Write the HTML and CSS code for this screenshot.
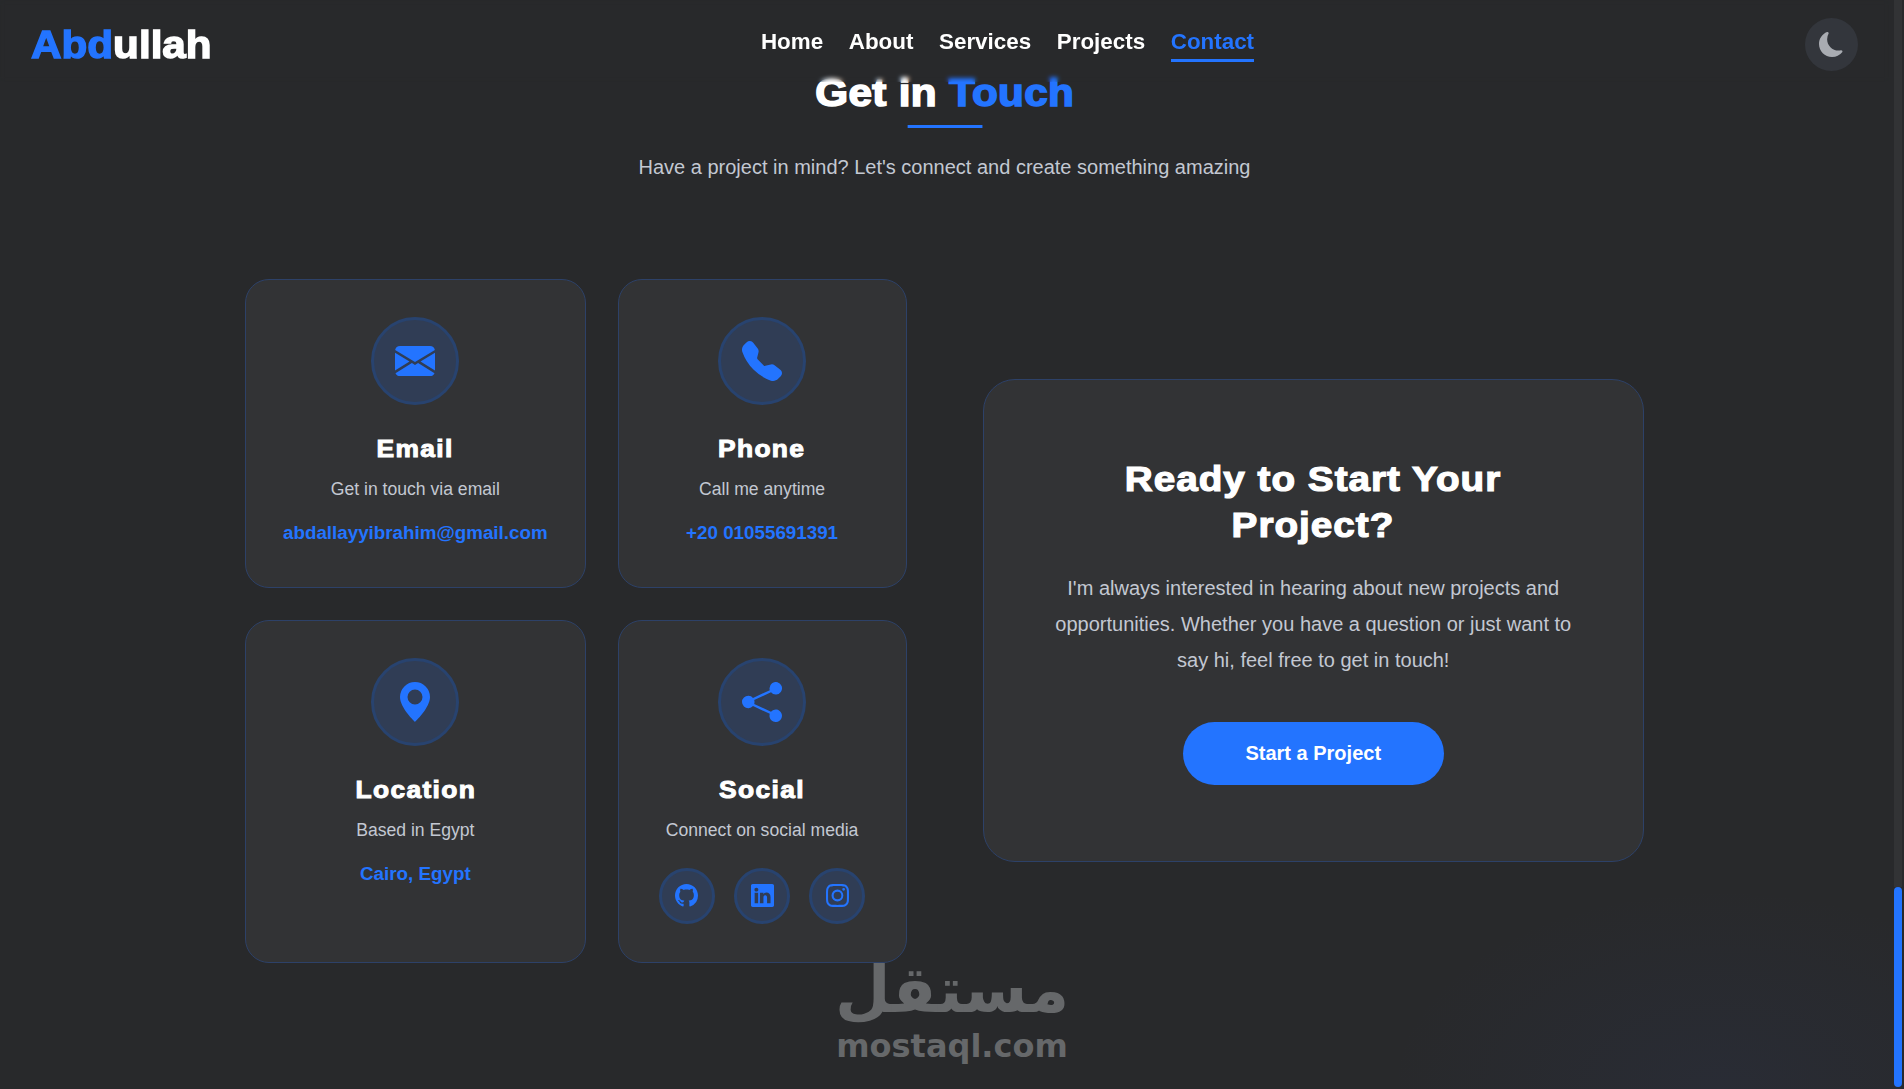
FILE: index.html
```html
<!DOCTYPE html>
<html lang="en">
<head>
    <meta charset="UTF-8">
    <meta name="viewport" content="width=device-width, initial-scale=1.0">
    <title>Abdullah - Contact</title>
    <link rel="stylesheet" href="styles.css">
</head>
<body>
<div class="page">
    <div class="page-content">
        <header class="navbar">
            <a class="logo" href="#"><span class="accent">Abd</span>ullah</a>
            <nav class="nav-links">
                <a href="#">Home</a>
                <a href="#">About</a>
                <a href="#">Services</a>
                <a href="#">Projects</a>
                <a href="#" class="active">Contact</a>
            </nav>
            <button class="theme-toggle" aria-label="Toggle theme">
                <svg viewBox="0 0 16 16" width="25" height="25"><path d="M6 .278a.768.768 0 0 1 .08.858 7.208 7.208 0 0 0-.878 3.46c0 4.021 3.278 7.277 7.318 7.277.527 0 1.04-.055 1.533-.16a.787.787 0 0 1 .81.316.733.733 0 0 1-.031.893A8.349 8.349 0 0 1 8.344 16C3.734 16 0 12.286 0 7.71 0 4.266 2.114 1.312 5.124.06A.752.752 0 0 1 6 .278z"/></svg>
            </button>
        </header>

        <section class="contact">
            <h2 class="section-title">Get in <span class="accent">Touch</span></h2>
            <p class="section-sub">Have a project in mind? Let's connect and create something amazing</p>

            <div class="contact-wrap">
                <div class="contact-cards">
                    <div class="card">
                        <div class="icon-circle">
                            <svg viewBox="0 0 16 16" width="40" height="40"><path d="M.05 3.555A2 2 0 0 1 2 2h12a2 2 0 0 1 1.95 1.555L8 8.414.05 3.555ZM0 4.697v7.104l5.803-3.558L0 4.697ZM6.761 8.83l-6.57 4.026A2 2 0 0 0 2 14h12a2 2 0 0 0 1.808-1.144l-6.57-4.027L8 9.586l-1.239-.757Zm3.436-.586L16 11.801V4.697l-5.803 3.546Z"/></svg>
                        </div>
                        <h3>Email</h3>
                        <p>Get in touch via email</p>
                        <a class="card-link" href="#">abdallayyibrahim@gmail.com</a>
                    </div>
                    <div class="card">
                        <div class="icon-circle">
                            <svg viewBox="0 0 16 16" width="40" height="40"><path d="M1.885.511a1.745 1.745 0 0 1 2.61.163L6.29 2.98c.329.423.445.974.315 1.494l-.547 2.19a.678.678 0 0 0 .178.643l2.457 2.457a.678.678 0 0 0 .644.178l2.189-.547a1.745 1.745 0 0 1 1.494.315l2.306 1.794c.829.645.905 1.87.163 2.611l-1.034 1.034c-.74.74-1.846 1.065-2.877.702a18.634 18.634 0 0 1-7.01-4.42 18.634 18.634 0 0 1-4.42-7.009c-.362-1.03-.037-2.137.703-2.877L1.885.511z"/></svg>
                        </div>
                        <h3>Phone</h3>
                        <p>Call me anytime</p>
                        <a class="card-link" href="#">+20 01055691391</a>
                    </div>
                    <div class="card">
                        <div class="icon-circle">
                            <svg viewBox="0 0 16 16" width="40" height="40"><path d="M8 16s6-5.686 6-10A6 6 0 0 0 2 6c0 4.314 6 10 6 10zm0-7a3 3 0 1 1 0-6 3 3 0 0 1 0 6z"/></svg>
                        </div>
                        <h3>Location</h3>
                        <p>Based in Egypt</p>
                        <a class="card-link" href="#">Cairo, Egypt</a>
                    </div>
                    <div class="card">
                        <div class="icon-circle">
                            <svg viewBox="0 0 16 16" width="40" height="40"><path d="M11 2.5a2.5 2.5 0 1 1 .603 1.628l-6.718 3.12a2.499 2.499 0 0 1 0 1.504l6.718 3.12a2.5 2.5 0 1 1-.488.876l-6.718-3.12a2.5 2.5 0 1 1 0-3.256l6.718-3.12A2.5 2.5 0 0 1 11 2.5z"/></svg>
                        </div>
                        <h3>Social</h3>
                        <p>Connect on social media</p>
                        <div class="social-links">
                            <a class="social-btn" href="#"><svg viewBox="0 0 16 16" width="23" height="23"><path d="M8 0C3.58 0 0 3.58 0 8c0 3.54 2.29 6.53 5.47 7.59.4.07.55-.17.55-.38 0-.19-.01-.82-.01-1.49-2.01.37-2.53-.49-2.69-.94-.09-.23-.48-.94-.82-1.13-.28-.15-.68-.52-.01-.53.63-.01 1.08.58 1.23.82.72 1.21 1.87.87 2.33.66.07-.52.28-.87.51-1.07-1.78-.2-3.64-.89-3.64-3.95 0-.87.31-1.59.82-2.15-.08-.2-.36-1.02.08-2.12 0 0 .67-.21 2.2.82.64-.18 1.32-.27 2-.27.68 0 1.36.09 2 .27 1.53-1.04 2.2-.82 2.2-.82.44 1.1.16 1.92.08 2.12.51.56.82 1.27.82 2.15 0 3.07-1.87 3.75-3.65 3.95.29.25.54.73.54 1.48 0 1.07-.01 1.93-.01 2.2 0 .21.15.46.55.38A8.012 8.012 0 0 0 16 8c0-4.42-3.58-8-8-8z"/></svg></a>
                            <a class="social-btn" href="#"><svg viewBox="0 0 16 16" width="23" height="23"><path d="M0 1.146C0 .513.526 0 1.175 0h13.65C15.474 0 16 .513 16 1.146v13.708c0 .633-.526 1.146-1.175 1.146H1.175C.526 16 0 15.487 0 14.854V1.146zm4.943 12.248V6.169H2.542v7.225h2.401zm-1.2-8.212c.837 0 1.358-.554 1.358-1.248-.015-.709-.52-1.248-1.342-1.248-.822 0-1.359.54-1.359 1.248 0 .694.521 1.248 1.327 1.248h.016zm4.908 8.212V9.359c0-.216.016-.432.08-.586.173-.431.568-.878 1.232-.878.869 0 1.216.662 1.216 1.634v3.865h2.401V9.25c0-2.22-1.184-3.252-2.764-3.252-1.274 0-1.845.7-2.165 1.193v.025h-.016a5.54 5.54 0 0 1 .016-.025V6.169h-2.4c.03.678 0 7.225 0 7.225h2.4z"/></svg></a>
                            <a class="social-btn" href="#"><svg viewBox="0 0 16 16" width="23" height="23"><path d="M8 0C5.829 0 5.556.01 4.703.048 3.85.088 3.269.222 2.76.42a3.917 3.917 0 0 0-1.417.923A3.927 3.927 0 0 0 .42 2.76C.222 3.268.087 3.85.048 4.7.01 5.555 0 5.827 0 8.001c0 2.172.01 2.444.048 3.297.04.852.174 1.433.372 1.942.205.526.478.972.923 1.417.444.445.89.719 1.416.923.51.198 1.09.333 1.942.372C5.555 15.99 5.827 16 8 16s2.444-.01 3.298-.048c.851-.04 1.434-.174 1.943-.372a3.916 3.916 0 0 0 1.416-.923c.445-.445.718-.891.923-1.417.197-.509.332-1.09.372-1.942C15.99 10.445 16 10.173 16 8s-.01-2.445-.048-3.299c-.04-.851-.175-1.433-.372-1.941a3.926 3.926 0 0 0-.923-1.417A3.911 3.911 0 0 0 13.24.42c-.51-.198-1.092-.333-1.943-.372C10.443.01 10.172 0 7.998 0h.003zm-.717 1.442h.718c2.136 0 2.389.007 3.232.046.78.035 1.204.166 1.486.275.373.145.64.319.92.599.28.28.453.546.598.92.11.281.24.705.275 1.485.039.843.047 1.096.047 3.231s-.008 2.389-.047 3.232c-.035.78-.166 1.203-.275 1.485a2.47 2.47 0 0 1-.599.919c-.28.28-.546.453-.92.598-.28.11-.704.24-1.485.276-.843.038-1.096.047-3.232.047s-2.39-.009-3.233-.047c-.78-.036-1.203-.166-1.485-.276a2.478 2.478 0 0 1-.92-.598 2.48 2.48 0 0 1-.6-.92c-.109-.281-.24-.705-.275-1.485-.038-.843-.046-1.096-.046-3.233 0-2.136.008-2.388.046-3.231.036-.78.166-1.204.276-1.486.145-.373.319-.64.599-.92.28-.28.546-.453.92-.598.282-.11.705-.24 1.485-.276.738-.034 1.024-.044 2.515-.045v.002zm4.988 1.328a.96.96 0 1 0 0 1.92.96.96 0 0 0 0-1.92zm-4.27 1.122a4.109 4.109 0 1 0 0 8.217 4.109 4.109 0 0 0 0-8.217zm0 1.441a2.667 2.667 0 1 1 0 5.334 2.667 2.667 0 0 1 0-5.334z"/></svg></a>
                        </div>
                    </div>
                </div>

                <div class="cta-card">
                    <h3>Ready to Start Your Project?</h3>
                    <p>I'm always interested in hearing about new projects and opportunities. Whether you have a question or just want to say hi, feel free to get in touch!</p>
                    <a class="cta-btn" href="#">Start a Project</a>
                </div>
            </div>
        </section>

        <div class="watermark">
            <span class="watermark-ar" lang="ar" dir="rtl">مستقل</span>
            <span class="watermark-en">mostaql.com</span>
        </div>
    </div>

    <div class="scrollbar">
        <div class="scrollbar-thumb"></div>
    </div>
</div>
</body>
</html>
```

FILE: styles.css
```css
* {
    margin: 0;
    padding: 0;
    box-sizing: border-box;
    font-family: 'Liberation Sans', Arial, sans-serif;
}

body {
    height: 100vh;
    overflow: hidden;
    background: #28292b;
}

a {
    text-decoration: none;
}

.accent {
    color: #2374ff;
}

.page {
    display: flex;
    height: 100vh;
    background:
        radial-gradient(ellipse 330px 200px at 1720px 1089px, rgba(50, 70, 140, 0.1), transparent),
        #28292b;
}

.page-content {
    position: relative;
    flex: 1;
    min-width: 0;
}

/* header sits over the section, so the title blurs behind it */
.navbar {
    position: absolute;
    top: 0;
    left: 0;
    right: 0;
    height: 82px;
    padding: 6px 31px 0;
    display: flex;
    justify-content: space-between;
    align-items: center;
    backdrop-filter: blur(2px);
    -webkit-backdrop-filter: blur(2px);
    z-index: 5;
}

/* heavy headings: widened a little to get the black weight */
.logo {
    font-size: 38.4px;
    font-weight: 700;
    color: #fff;
    -webkit-text-stroke: 1.4px #fff;
    transform: scaleX(1.1);
    transform-origin: left center;
    width: 179px;
    margin-top: 2px;
    white-space: nowrap;
}

.logo .accent {
    -webkit-text-stroke: 1.4px #2374ff;
}

.nav-links {
    display: flex;
    gap: 25.6px;
    margin-top: 3px;
}

.nav-links a {
    font-size: 22.4px;
    font-weight: 700;
    color: #fff;
    padding-bottom: 4px;
    border-bottom: 3px solid transparent;
}

.nav-links a.active {
    color: #2374ff;
    border-bottom-color: #2374ff;
}

.theme-toggle {
    width: 53px;
    height: 53px;
    border: none;
    border-radius: 50%;
    background: #33363c;
    display: flex;
    align-items: center;
    justify-content: center;
}

.theme-toggle svg {
    fill: #a9acb2;
}

.contact {
    padding-top: 70px;
    display: flex;
    flex-direction: column;
    align-items: center;
}

.section-title {
    font-size: 38.4px;
    line-height: 46px;
    font-weight: 700;
    letter-spacing: 0.3px;
    color: #fff;
    -webkit-text-stroke: 1.6px #fff;
    transform: scaleX(1.1);
}

.section-title .accent {
    -webkit-text-stroke: 1.6px #2374ff;
}

.section-title::after {
    content: "";
    display: block;
    width: 68px;
    height: 3px;
    margin: 9px auto 0;
    background: #2374ff;
}

.section-sub {
    margin-top: 25px;
    font-size: 20px;
    line-height: 28px;
    color: #c3c8d2;
}

.contact-wrap {
    width: 1399px;
    margin-top: 98px;
    display: grid;
    grid-template-columns: 1fr 1fr;
    gap: 76px;
    align-items: center;
}

.contact-cards {
    display: grid;
    grid-template-columns: max-content 1fr;
    gap: 32px;
}

.card {
    padding: 37px 37px 40.5px;
    border: 1px solid #2d4168;
    border-radius: 24px;
    background: #323335;
    display: flex;
    flex-direction: column;
    align-items: center;
    text-align: center;
}

.icon-circle {
    width: 88px;
    height: 88px;
    border: 3px solid #28436f;
    border-radius: 50%;
    background: #303d55;
    display: flex;
    align-items: center;
    justify-content: center;
}

.icon-circle svg,
.social-btn svg {
    fill: #2374ff;
}

.card h3 {
    margin-top: 28px;
    font-size: 24px;
    line-height: 32px;
    font-weight: 700;
    letter-spacing: 1.2px;
    color: #fff;
    -webkit-text-stroke: 1px #fff;
    transform: scaleX(1.1);
}

.card p {
    margin-top: 11px;
    font-size: 17.6px;
    line-height: 26px;
    color: #c3c8d2;
}

.card-link {
    margin-top: 18px;
    font-size: 18.8px;
    line-height: 26px;
    font-weight: 700;
    color: #2374ff;
}

.social-links {
    margin-top: 25px;
    margin-bottom: -2.5px;
    display: flex;
    gap: 19.2px;
}

.social-btn {
    width: 56px;
    height: 56px;
    border: 3px solid #28436f;
    border-radius: 50%;
    background: #303d55;
    display: flex;
    align-items: center;
    justify-content: center;
}

.cta-card {
    padding: 76px 64px;
    border: 1px solid #2d4168;
    border-radius: 32px;
    background: #323335;
    display: flex;
    flex-direction: column;
    align-items: center;
    text-align: center;
}

.cta-card h3 {
    max-width: 380px;
    font-size: 35.2px;
    line-height: 45.6px;
    font-weight: 700;
    letter-spacing: 0.9px;
    color: #fff;
    -webkit-text-stroke: 1.2px #fff;
    transform: scaleX(1.1);
}

.cta-card p {
    margin-top: 23px;
    font-size: 20px;
    line-height: 36px;
    color: #c3c8d2;
}

.cta-btn {
    margin-top: 44px;
    width: 261px;
    height: 63px;
    border-radius: 32px;
    background: #2374ff;
    color: #fff;
    font-size: 20px;
    font-weight: 700;
    display: flex;
    align-items: center;
    justify-content: center;
}

.watermark {
    position: absolute;
    left: 838px;
    top: 952px;
    width: 228px;
    display: flex;
    flex-direction: column;
    align-items: center;
    color: #66686a;
    z-index: 6;
}

.watermark-ar {
    font-family: 'DejaVu Sans', sans-serif;
    font-size: 64px;
    font-weight: 700;
    line-height: 76px;
}

.watermark-en {
    font-family: 'DejaVu Sans', sans-serif;
    font-size: 32px;
    font-weight: 700;
    line-height: 36px;
}

.scrollbar {
    flex: 0 0 15px;
    padding: 0 2px 2px 5px;
    display: flex;
    flex-direction: column;
}

.scrollbar::before {
    content: "";
    flex: 1;
    background: #323335;
}

.scrollbar-thumb {
    height: 200px;
    border-radius: 4px;
    background: #2374ff;
}
```
